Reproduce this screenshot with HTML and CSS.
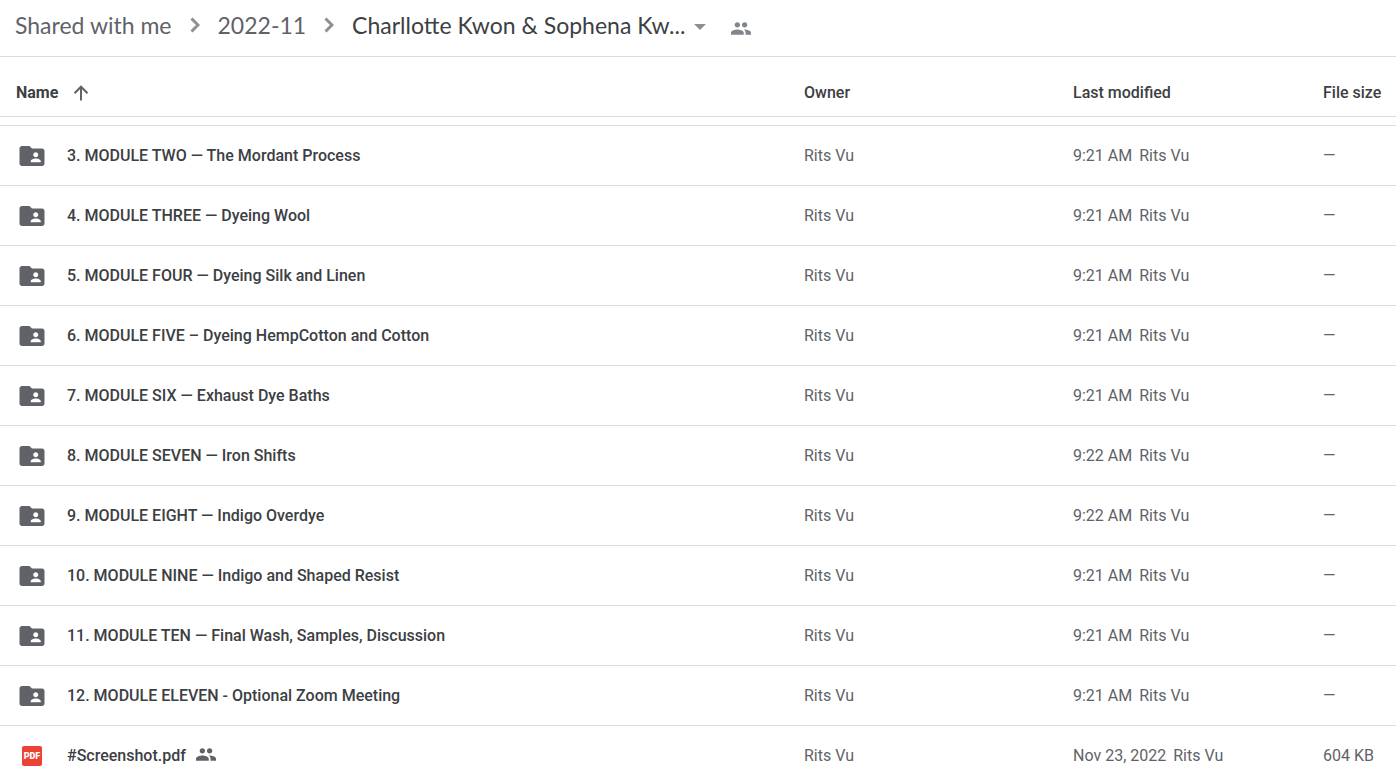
FILE: index.html
```html
<!DOCTYPE html>
<html lang="en">
<head>
<meta charset="utf-8">
<title>Shared with me</title>
<link rel="stylesheet" href="styles.css">
</head>
<body>
<svg class="sprite" aria-hidden="true">
  <symbol id="folder" viewBox="0 0 24 24"><path d="M20 6h-8l-2-2H4c-1.100 0-1.990.9-1.990 2L2 18c0 1.100.9 2 2 2h16c1.100 0 2-.9 2-2V8c0-1.100-.9-2-2-2zm-5 3c1.100 0 2 .9 2 2s-.9 2-2 2-2-.9-2-2 .9-2 2-2zm4 8h-8v-1c0-1.330 2.670-2 4-2s4 .67 4 2v1z"/></symbol>
  <symbol id="people" viewBox="1 5 22 14"><path d="M16 11c1.660 0 2.990-1.340 2.990-3S17.660 5 16 5s-3 1.340-3 3 1.340 3 3 3zM8 11c1.660 0 2.990-1.340 2.990-3S9.660 5 8 5 5 6.340 5 8s1.340 3 3 3zm0 2c-2.330 0-7 1.170-7 3.500V19h14v-2.500C15 14.170 10.330 13 8 13zm8 0c-.29 0-.62.02-.97.05 1.160.84 1.970 1.970 1.970 3.450V19h6v-2.500c0-2.330-4.670-3.500-7-3.500z"/></symbol>
  <symbol id="chevron" viewBox="0 0 10 16"><path d="M1.500 1.500 8 8l-6.500 6.500" fill="none" stroke="currentColor" stroke-width="3"/></symbol>
</svg>
<header class="topbar">
  <nav class="crumbs" aria-label="Breadcrumb">
    <a class="crumb" href="#shared">Shared with me</a>
    <svg class="chevron"><use href="#chevron"/></svg>
    <a class="crumb" href="#2022-11">2022-11</a>
    <svg class="chevron"><use href="#chevron"/></svg>
    <button class="crumb crumb-current" type="button">Charllotte Kwon &amp; Sophena Kw...<svg class="caret" viewBox="0 0 12 6"><path d="M0 0h12L6 6z"/></svg></button>
  </nav>
  <button class="share" type="button" aria-label="Manage people"><svg class="people"><use href="#people"/></svg></button>
</header>
<main class="list">
<table class="files">
  <colgroup><col><col class="col-owner"><col class="col-modified"><col class="col-size"></colgroup>
  <thead><tr>
    <th scope="col"><button class="sort" type="button">Name<svg class="arrow" viewBox="0 0 16 16"><path d="M8 15.500V2M1.500 8.200 8 1.700l6.500 6.500"/></svg></button></th>
    <th scope="col">Owner</th><th scope="col">Last modified</th><th scope="col">File size</th>
  </tr></thead>
  <tbody>
    <tr><td><div class="name"><svg class="folder"><use href="#folder"/></svg>3. MODULE TWO — The Mordant Process</div></td><td>Rits Vu</td><td>9:21 AM<span class="by">Rits Vu</span></td><td>—</td></tr>
    <tr><td><div class="name"><svg class="folder"><use href="#folder"/></svg>4. MODULE THREE — Dyeing Wool</div></td><td>Rits Vu</td><td>9:21 AM<span class="by">Rits Vu</span></td><td>—</td></tr>
    <tr><td><div class="name"><svg class="folder"><use href="#folder"/></svg>5. MODULE FOUR — Dyeing Silk and Linen</div></td><td>Rits Vu</td><td>9:21 AM<span class="by">Rits Vu</span></td><td>—</td></tr>
    <tr><td><div class="name"><svg class="folder"><use href="#folder"/></svg>6. MODULE FIVE – Dyeing HempCotton and Cotton</div></td><td>Rits Vu</td><td>9:21 AM<span class="by">Rits Vu</span></td><td>—</td></tr>
    <tr><td><div class="name"><svg class="folder"><use href="#folder"/></svg>7. MODULE SIX — Exhaust Dye Baths</div></td><td>Rits Vu</td><td>9:21 AM<span class="by">Rits Vu</span></td><td>—</td></tr>
    <tr><td><div class="name"><svg class="folder"><use href="#folder"/></svg>8. MODULE SEVEN — Iron Shifts</div></td><td>Rits Vu</td><td>9:22 AM<span class="by">Rits Vu</span></td><td>—</td></tr>
    <tr><td><div class="name"><svg class="folder"><use href="#folder"/></svg>9. MODULE EIGHT — Indigo Overdye</div></td><td>Rits Vu</td><td>9:22 AM<span class="by">Rits Vu</span></td><td>—</td></tr>
    <tr><td><div class="name"><svg class="folder"><use href="#folder"/></svg>10. MODULE NINE — Indigo and Shaped Resist</div></td><td>Rits Vu</td><td>9:21 AM<span class="by">Rits Vu</span></td><td>—</td></tr>
    <tr><td><div class="name"><svg class="folder"><use href="#folder"/></svg>11. MODULE TEN — Final Wash, Samples, Discussion</div></td><td>Rits Vu</td><td>9:21 AM<span class="by">Rits Vu</span></td><td>—</td></tr>
    <tr><td><div class="name"><svg class="folder"><use href="#folder"/></svg>12. MODULE ELEVEN - Optional Zoom Meeting</div></td><td>Rits Vu</td><td>9:21 AM<span class="by">Rits Vu</span></td><td>—</td></tr>
    <tr><td><div class="name"><span class="pdf">PDF</span>#Screenshot.pdf<svg class="people shared"><use href="#people"/></svg></div></td><td>Rits Vu</td><td>Nov 23, 2022<span class="by">Rits Vu</span></td><td>604 KB</td></tr>
  </tbody>
</table>
</main>
</body>
</html>
```
FILE: styles.css
```css
* { box-sizing: border-box; }
body {
  margin: 0;
  height: 100vh;
  display: flex;
  flex-direction: column;
  overflow: hidden;
  background: #fff;
  color: #3c4043;
  font: 400 16px/20px Roboto, sans-serif;
}
button { border: 0; padding: 0; background: none; font: inherit; color: inherit; }
svg { flex: none; fill: currentColor; }
.sprite { position: absolute; width: 0; height: 0; }

.topbar {
  display: flex;
  align-items: center;
  gap: 25px;
  flex: none;
  padding: 7px 15px 13px;
  border-bottom: 1px solid #dadce0;
}
.crumbs { display: flex; align-items: center; gap: 18px; font: 400 23px/36px Lato, sans-serif; }
.crumb { color: #5f6368; text-decoration: none; white-space: nowrap; }
.crumb-current { display: flex; align-items: center; gap: 9px; color: #3c4043; }
.chevron { width: 10px; height: 16px; color: #8f8f8f; }
.caret { width: 12px; height: 6px; margin-top: 3px; color: #8f8f8f; }
.share { display: flex; padding-top: 7px; color: #80868b; }
.people { width: 20px; height: 13px; }

.list { flex: 1; min-height: 0; overflow: hidden; }
.files { width: 100%; table-layout: fixed; border-collapse: separate; border-spacing: 0; }
.col-owner { width: 269px; }
.col-modified { width: 250px; }
.col-size { width: 73px; }
th, td { height: 60px; padding: 0; white-space: nowrap; vertical-align: middle; }
th { padding-top: 13px; border-bottom: 1px solid #dadce0; font-weight: 500; text-align: left; color: #3c4043; }
td { border-top: 1px solid #dadce0; color: #5f6368; }
tbody::before { content: ""; display: table-row; height: 8px; }
.sort { display: flex; align-items: center; gap: 15px; padding-left: 16px; font-weight: 700; }
.arrow { width: 16px; height: 16px; fill: none; stroke: #5f6368; stroke-width: 2; }
.name { display: flex; align-items: center; padding: 1px 0 0 17px; color: #3c4043; font-weight: 500; line-height: 22px; }
.folder { width: 30px; height: 30px; margin-right: 20px; color: #5f6368; }
.pdf {
  width: 20px;
  margin: 0 25px 0 5px;
  border-radius: 2px;
  background: #ea4335;
  color: #fff;
  font: 900 9px/20px Roboto, sans-serif;
  text-align: center;
}
.shared { margin: 0 0 3px 10px; color: #5f6368; }
.by { margin-left: 7px; }
```
